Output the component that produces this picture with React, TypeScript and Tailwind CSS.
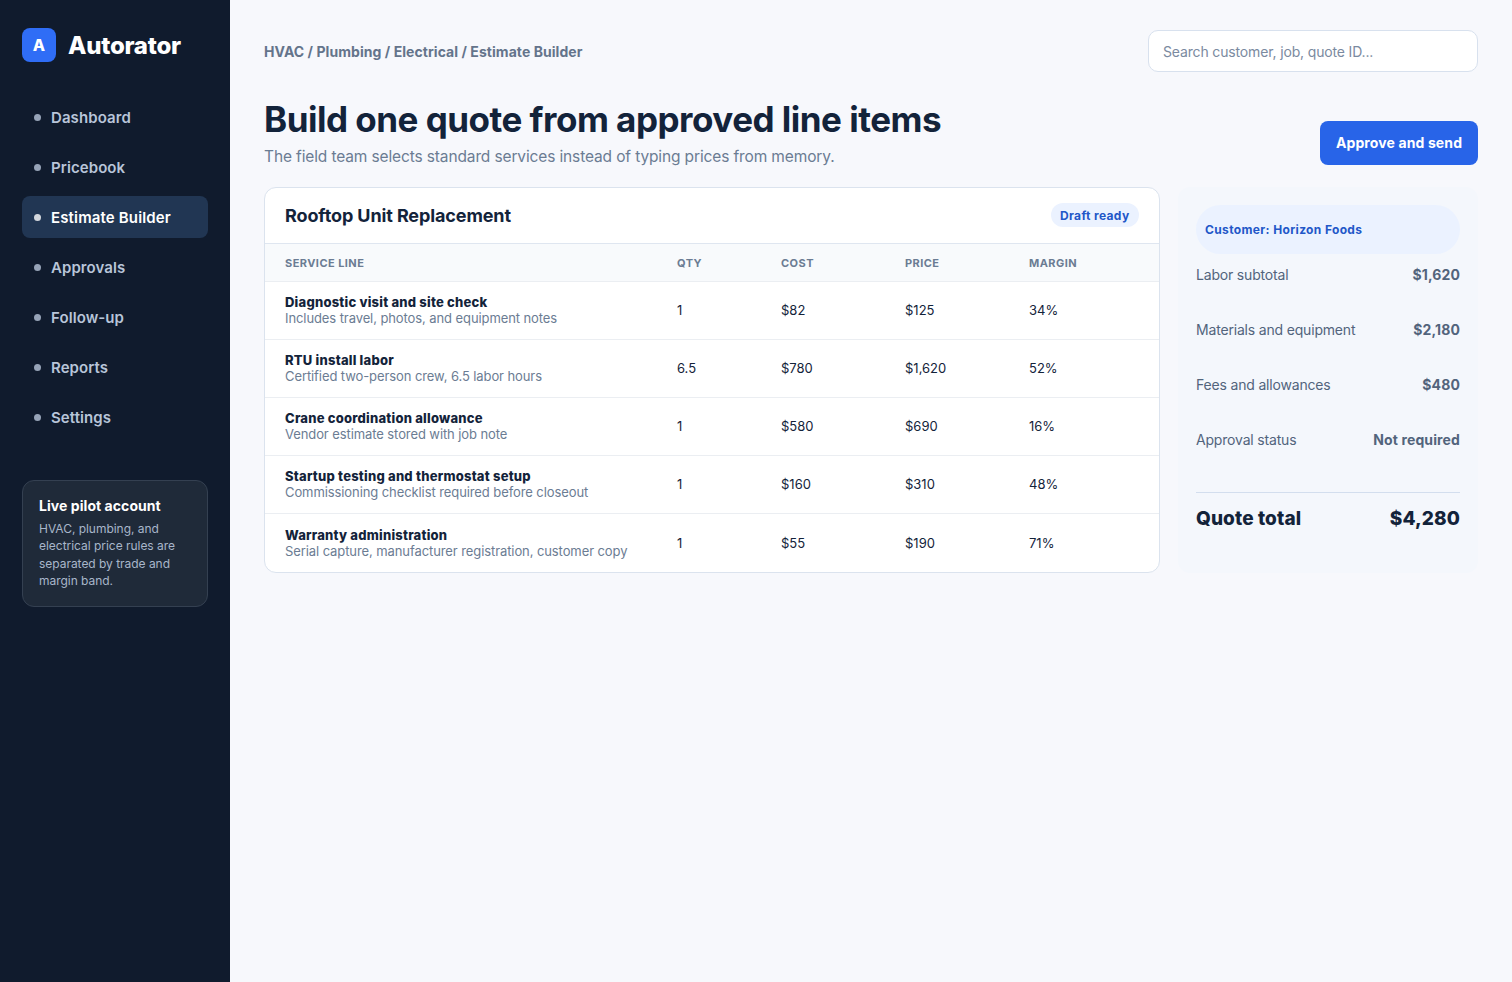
const navItems = [
    'Dashboard',
    'Pricebook',
    'Estimate Builder',
    'Approvals',
    'Follow-up',
    'Reports',
    'Settings',
];

const lines = [
    {
        name: 'Diagnostic visit and site check',
        note: 'Includes travel, photos, and equipment notes',
        qty: '1',
        cost: '$82',
        price: '$125',
        margin: '34%',
    },
    {
        name: 'RTU install labor',
        note: 'Certified two-person crew, 6.5 labor hours',
        qty: '6.5',
        cost: '$780',
        price: '$1,620',
        margin: '52%',
    },
    {
        name: 'Crane coordination allowance',
        note: 'Vendor estimate stored with job note',
        qty: '1',
        cost: '$580',
        price: '$690',
        margin: '16%',
    },
    {
        name: 'Startup testing and thermostat setup',
        note: 'Commissioning checklist required before closeout',
        qty: '1',
        cost: '$160',
        price: '$310',
        margin: '48%',
    },
    {
        name: 'Warranty administration',
        note: 'Serial capture, manufacturer registration, customer copy',
        qty: '1',
        cost: '$55',
        price: '$190',
        margin: '71%',
    },
];

const summary = [
    { label: 'Labor subtotal', value: '$1,620' },
    { label: 'Materials and equipment', value: '$2,180' },
    { label: 'Fees and allowances', value: '$480' },
    { label: 'Approval status', value: 'Not required' },
];

function Sidebar({ active }: { active: string }) {
    return (
        <aside className="w-[230px] shrink-0 bg-[#101b2d] px-[22px] py-7">
            <div className="flex items-center gap-3">
                <div className="flex size-[34px] items-center justify-center rounded-lg bg-[#2f6df6] text-base font-extrabold text-white">
                    A
                </div>
                <span className="pt-0.5 text-2xl font-extrabold tracking-[-0.25px] text-white">
                    Autorator
                </span>
            </div>
            <nav className="mt-[34px] grid gap-2">
                {navItems.map((item) => (
                    <a
                        key={item}
                        className={`flex h-[42px] items-center gap-2.5 rounded-lg px-3 text-[15px] font-semibold ${
                            item === active
                                ? 'bg-[#213653] tracking-[0.15px] text-white'
                                : 'tracking-[0.08px] text-[#b8c5d9]'
                        }`}
                    >
                        <span className="size-[7px] rounded-full bg-current opacity-80" />
                        <span className="pt-0.5">{item}</span>
                    </a>
                ))}
            </nav>
            <div className="mt-[42px] h-[127px] rounded-xl border border-[#344051] bg-[#1f2a39] p-4">
                <h3 className="text-sm leading-[18px] font-bold tracking-[0.06px] text-white">
                    Live pilot account
                </h3>
                <p className="mt-[5px] text-xs leading-[17.4px] tracking-[-0.03px] text-[#a8b6ca]">
                    HVAC, plumbing, and electrical price rules are separated by
                    trade and margin band.
                </p>
            </div>
        </aside>
    );
}

function LineItems() {
    return (
        <section className="overflow-hidden rounded-xl border border-[#dbe3ee] bg-white">
            <div className="flex h-14 items-center justify-between border-b border-[#dfe6f0] px-5">
                <h2 className="text-lg font-bold tracking-[-0.11px]">
                    Rooftop Unit Replacement
                </h2>
                <span className="mb-0.5 flex h-6 w-[88px] items-center rounded-full bg-[#ebf2ff] px-[9px] pt-0.5 text-xs font-bold tracking-[0.35px] whitespace-nowrap text-[#2257c8]">
                    Draft ready
                </span>
            </div>
            <div className="grid h-[38px] grid-cols-[392px_104px_124px_124px_110px] items-center border-b border-[#ebeef2] bg-[#f8fafc] px-5 pt-0.5 text-[11px] font-bold tracking-[0.44px] text-[#6b7c93] uppercase">
                <span>Service line</span>
                <span>Qty</span>
                <span>Cost</span>
                <span>Price</span>
                <span>Margin</span>
            </div>
            {lines.map((line) => (
                <div
                    key={line.name}
                    className="grid h-[58px] grid-cols-[392px_104px_124px_124px_110px] items-center border-b border-[#ebeef2] px-5 pb-[2px] text-[13px] leading-4 last:border-b-0 last:pb-0"
                >
                    <div>
                        <strong className="block font-extrabold tracking-[0.22px]">
                            {line.name}
                        </strong>
                        <span className="block tracking-[-0.09px] text-[#6b7c93]">
                            {line.note}
                        </span>
                    </div>
                    <span>{line.qty}</span>
                    <span>{line.cost}</span>
                    <span>{line.price}</span>
                    <span>{line.margin}</span>
                </div>
            ))}
        </section>
    );
}

function QuoteSummary() {
    return (
        <section className="rounded-xl bg-[#f4f7fc] p-[18px]">
            <div className="flex h-[49px] items-center rounded-full bg-[#ebf2ff] px-[9px] text-xs font-bold tracking-[0.36px] text-[#2257c8]">
                Customer: Horizon Foods
            </div>
            <div className="mt-2.5 grid gap-[34px] text-sm leading-[21px] text-[#52647c]">
                {summary.map((row) => (
                    <div key={row.label} className="flex justify-between">
                        <span className="tracking-[-0.18px]">{row.label}</span>
                        <strong className="font-bold tracking-[0.12px]">
                            {row.value}
                        </strong>
                    </div>
                ))}
            </div>
            <div className="mt-[42px] flex justify-between border-t border-[#d3deee] pt-3 text-[19px] leading-7 font-extrabold tracking-[0.1px]">
                <span>Quote total</span>
                <span>{'$4,280'}</span>
            </div>
        </section>
    );
}

export default function App() {
    return (
        <div className="flex min-h-screen bg-[#f7f8fc] font-['Inter',sans-serif] text-[#13233a]">
            <Sidebar active="Estimate Builder" />
            <main className="flex-1 px-[34px] py-[30px]">
                <header className="flex items-center justify-between">
                    <div className="pt-0.5 text-sm font-bold tracking-[0.055px] text-[#64748b]">
                        HVAC / Plumbing / Electrical / Estimate Builder
                    </div>
                    <div className="flex h-[42px] w-[330px] items-center rounded-[10px] border border-[#d8e1ee] bg-white px-3.5 pt-0.5 text-sm tracking-[-0.15px] text-[#7b8aa0]">
                        Search customer, job, quote ID...
                    </div>
                </header>
                <div className="mt-6 flex items-end justify-between">
                    <div>
                        <h1 className="text-[35px] leading-[46px] font-bold tracking-[-0.5px]">
                            Build one quote from approved line items
                        </h1>
                        <p className="mt-[5px] -mb-px text-[15.5px] leading-[19px] tracking-[-0.13px] text-[#6b7c93]">
                            The field team selects standard services instead of
                            typing prices from memory.
                        </p>
                    </div>
                    <button className="h-11 w-[158px] rounded-lg bg-[#2864e8] text-sm font-bold tracking-[0.12px] text-white">
                        Approve and send
                    </button>
                </div>
                <div className="mt-[22px] grid grid-cols-[1fr_300px] gap-[18px]">
                    <LineItems />
                    <QuoteSummary />
                </div>
            </main>
        </div>
    );
}
